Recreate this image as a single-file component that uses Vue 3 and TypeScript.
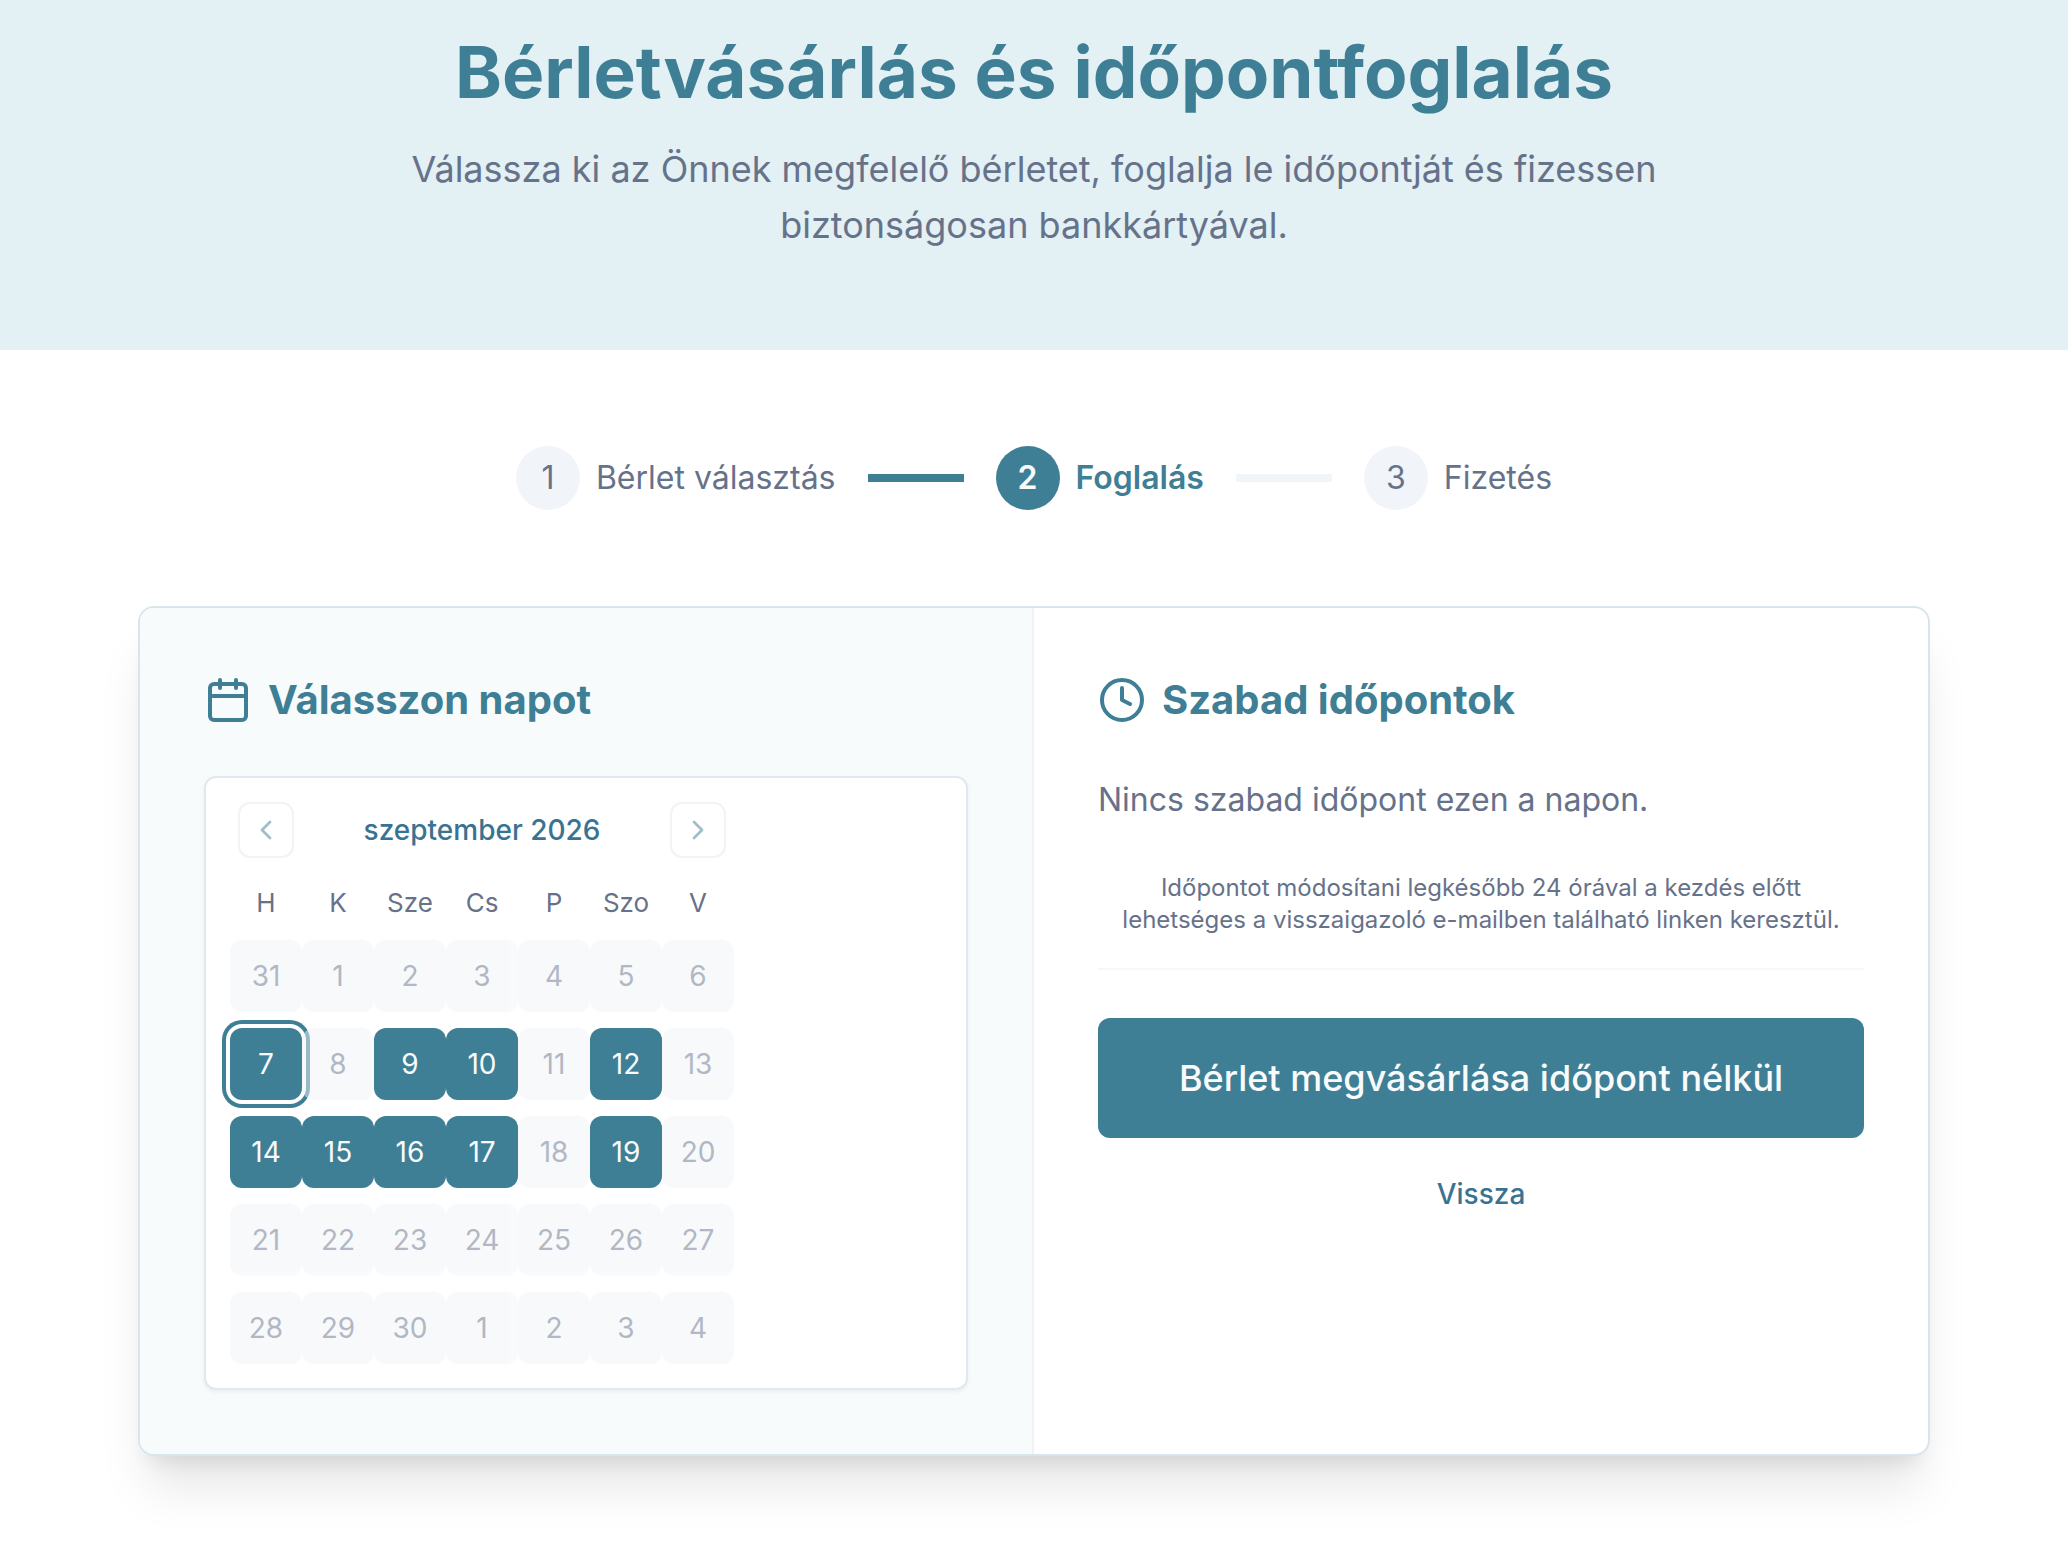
<script setup lang="ts">
import { ref } from 'vue'

interface Step {
  id: number
  label: string
}

interface Day {
  key: string
  label: number
  free: boolean
}

const steps: Step[] = [
  { id: 1, label: 'Bérlet választás' },
  { id: 2, label: 'Foglalás' },
  { id: 3, label: 'Fizetés' },
]
const currentStep = 2

const weekdays = ['H', 'K', 'Sze', 'Cs', 'P', 'Szo', 'V']
const freeDays = new Set(['8-7', '8-9', '8-10', '8-12', '8-14', '8-15', '8-16', '8-17', '8-19'])

// Five Monday-first weeks, starting on 31 August 2026.
const weeks: Day[][] = Array.from({ length: 5 }, (_, week) =>
  Array.from({ length: 7 }, (_, day) => {
    const date = new Date(2026, 7, 31 + week * 7 + day)
    const key = `${date.getMonth()}-${date.getDate()}`
    return { key, label: date.getDate(), free: freeDays.has(key) }
  }),
)

const selected = ref('8-7')
</script>

<template>
  <div class="page">
    <header class="hero">
      <h1>Bérletvásárlás és időpontfoglalás</h1>
      <p>Válassza ki az Önnek megfelelő bérletet, foglalja le időpontját és fizessen biztonságosan bankkártyával.</p>
    </header>

    <main class="content">
      <ol class="steps">
        <template v-for="step in steps" :key="step.id">
          <li v-if="step.id > 1" class="bar" :class="{ done: step.id <= currentStep }" aria-hidden="true"></li>
          <li class="step" :class="{ active: step.id === currentStep }">
            <span class="dot">{{ step.id }}</span>
            <span>{{ step.label }}</span>
          </li>
        </template>
      </ol>

      <div class="card">
        <section class="panel days">
          <h2>
            <svg class="icon" viewBox="0 0 24 24" aria-hidden="true">
              <path d="M8 2v4M16 2v4M3 10h18" />
              <rect x="3" y="4" width="18" height="18" rx="2" />
            </svg>
            Válasszon napot
          </h2>
          <div class="calendar">
            <div class="month">
              <div class="caption">
                <button type="button" class="nav" aria-label="Előző hónap">
                  <svg viewBox="0 0 24 24" aria-hidden="true"><path d="m15 18-6-6 6-6" /></svg>
                </button>
                <span>szeptember 2026</span>
                <button type="button" class="nav" aria-label="Következő hónap">
                  <svg viewBox="0 0 24 24" aria-hidden="true"><path d="m9 18 6-6-6-6" /></svg>
                </button>
              </div>
              <table>
                <thead>
                  <tr>
                    <th v-for="name in weekdays" :key="name" scope="col">{{ name }}</th>
                  </tr>
                </thead>
                <tbody>
                  <tr v-for="(week, index) in weeks" :key="index">
                    <td v-for="day in week" :key="day.key">
                      <button
                        type="button"
                        class="day"
                        :class="{ selected: day.key === selected }"
                        :disabled="!day.free"
                        @click="selected = day.key"
                      >
                        {{ day.label }}
                      </button>
                    </td>
                  </tr>
                </tbody>
              </table>
            </div>
          </div>
        </section>

        <section class="panel">
          <h2>
            <svg class="icon" viewBox="0 0 24 24" aria-hidden="true">
              <circle cx="12" cy="12" r="10" />
              <path d="M12 6v6l4 2" />
            </svg>
            Szabad időpontok
          </h2>
          <p class="empty">Nincs szabad időpont ezen a napon.</p>
          <p class="note">
            Időpontot módosítani legkésőbb 24 órával a kezdés előtt lehetséges a visszaigazoló e-mailben található linken keresztül.
          </p>
          <button type="button" class="primary">Bérlet megvásárlása időpont nélkül</button>
          <button type="button" class="back">Vissza</button>
        </section>
      </div>
    </main>
  </div>
</template>

<style>
body {
  background: #fff;
}
</style>

<style scoped>
.page {
  --teal: #3f7f95;
  --link: #3a7391;
  --muted: #66728a;
  --line: #f1f5f9;
  font-family: Inter, sans-serif;
  font-size: 32px;
  line-height: 48px;
  color: var(--muted);
}

.page *,
.page *::before {
  box-sizing: border-box;
}

h1,
h2,
p,
ol {
  margin: 0;
  padding: 0;
}

button {
  margin: 0;
  padding: 0;
  border: 0;
  font: inherit;
  cursor: pointer;
}

svg {
  fill: none;
  stroke: currentColor;
  stroke-width: 2;
  stroke-linecap: round;
  stroke-linejoin: round;
}

.hero {
  padding: 24px 32px 97px;
  background: #e3f0f4;
  text-align: center;
}

.hero h1 {
  margin-bottom: 21px;
  font-size: 71px;
  line-height: 96px;
  font-weight: 700;
  color: var(--teal);
}

.hero p {
  max-width: 1344px;
  margin: 0 auto;
  font-size: 36px;
  line-height: 56px;
}

.content {
  max-width: 1856px;
  margin: 0 auto;
  padding: 96px 32px 80px;
}

.steps {
  display: flex;
  align-items: center;
  justify-content: center;
  gap: 32px;
  margin-bottom: 96px;
  list-style: none;
}

.step {
  display: flex;
  align-items: center;
  gap: 16px;
}

.dot {
  display: flex;
  align-items: center;
  justify-content: center;
  width: 64px;
  height: 64px;
  border-radius: 50%;
  background: var(--line);
}

.step.active {
  font-weight: 600;
  color: var(--teal);
}

.step.active .dot {
  background: var(--teal);
  color: #f8fafc;
}

.bar {
  width: 96px;
  height: 8px;
  background: var(--line);
}

.bar.done {
  background: var(--teal);
}

.card {
  display: grid;
  grid-template-columns: 1fr 1fr;
  border: 2px solid #d8e6eb;
  border-radius: 16px;
  background: #fff;
  box-shadow: 0 40px 50px -10px rgba(0, 0, 0, 0.1), 0 16px 20px -12px rgba(0, 0, 0, 0.1);
}

.panel {
  padding: 64px;
}

.days {
  border-right: 2px solid #eef3f7;
  border-radius: 14px 0 0 14px;
  background: #f7fbfc;
}

h2 {
  display: flex;
  align-items: center;
  gap: 16px;
  margin-bottom: 48px;
  font-size: 40px;
  line-height: 56px;
  font-weight: 700;
  color: var(--teal);
}

.icon {
  width: 48px;
  height: 48px;
}

.calendar {
  padding: 24px;
  border: 2px solid #e2e8ef;
  border-radius: 12px;
  background: #fff;
  box-shadow: 0 2px 4px rgba(0, 0, 0, 0.05);
}

.month {
  width: 504px;
}

.caption {
  display: flex;
  align-items: center;
  justify-content: space-between;
  margin-bottom: 24px;
  padding: 0 8px;
  font-size: 28px;
  font-weight: 500;
  color: var(--link);
}

.nav {
  display: flex;
  align-items: center;
  justify-content: center;
  width: 56px;
  height: 56px;
  border: 2px solid #e2e8f0;
  border-radius: 12px;
  background: #fff;
  color: var(--teal);
  opacity: 0.5;
}

.nav svg {
  width: 32px;
  height: 32px;
}

table {
  width: 100%;
  border-collapse: collapse;
  table-layout: fixed;
}

th {
  padding: 0;
  font-size: 26px;
  line-height: 42px;
  font-weight: 400;
}

td {
  padding: 16px 0 0;
}

.day {
  display: block;
  width: 72px;
  height: 72px;
  border-radius: 12px;
  background: var(--teal);
  font-size: 28px;
  line-height: 40px;
  color: #f8fafc;
}

.day:disabled {
  background: var(--line);
  color: var(--muted);
  opacity: 0.5;
  cursor: default;
}

.day.selected {
  box-shadow: 0 0 0 4px #fff, 0 0 0 8px var(--teal);
}

.note {
  margin-top: 48px;
  padding-bottom: 32px;
  border-bottom: 2px solid #f5f7fb;
  font-size: 24px;
  line-height: 32px;
  text-align: center;
}

.primary,
.back {
  display: block;
  width: 100%;
  font-weight: 500;
}

.primary {
  height: 120px;
  margin-top: 48px;
  border-radius: 12px;
  background: var(--teal);
  font-size: 36px;
  color: #f8fafc;
}

.back {
  height: 80px;
  margin-top: 16px;
  background: transparent;
  font-size: 28px;
  color: var(--link);
}
</style>
